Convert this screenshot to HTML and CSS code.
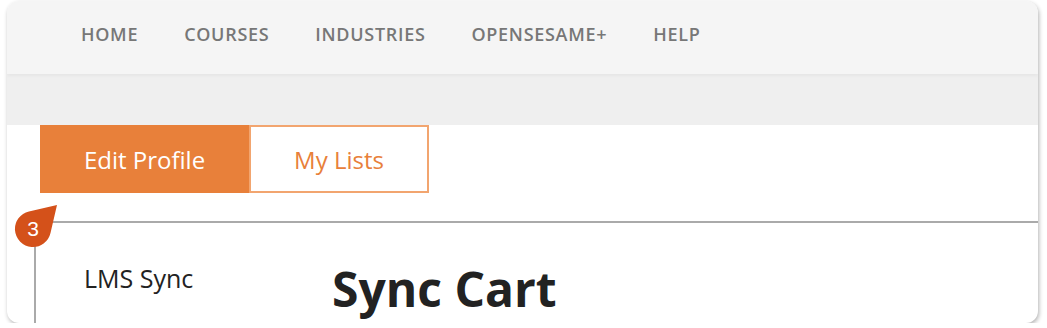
FILE: index.html
```html
<!DOCTYPE html>
<html>
<head>
  <title>Edit Profile</title>
  <link rel="stylesheet" href="styles.css">
</head>
<body>
  <div class="frame">
    <div class="nav">
      <a href="#">HOME</a>
      <a href="#">COURSES</a>
      <a href="#">INDUSTRIES</a>
      <a href="#">OPENSESAME+</a>
      <a href="#">HELP</a>
    </div>

    <div class="band"></div>

    <div class="content">
      <div class="tabs">
        <a href="#" class="tab active">Edit Profile</a>
        <a href="#" class="tab">My Lists</a>
      </div>

      <div class="panel">
        <div class="side">LMS Sync</div>
        <h1>Sync Cart</h1>
      </div>

      <div class="badge">
        <svg width="44" height="44" viewBox="0 0 44 44">
          <path d="M43 1 L36.5 29 A18 18 0 1 1 14.95 7.46 Z" fill="#d4511a"/>
        </svg>
        <span>3</span>
      </div>
    </div>
  </div>
</body>
</html>
```

FILE: styles.css
```css
body {
  margin: 0;
  background-color: #fff;
  font-family: "Open Sans", Arial, sans-serif;
}

.frame {
  width: 1031px;
  height: 322px;
  margin: 1px 0 0 7px;
  border-radius: 12px;
  overflow: hidden;
  background-color: #fff;
  box-shadow: 1px 2px 4px rgba(0, 0, 0, 0.3);
}

.nav {
  position: relative;
  z-index: 1;
  display: flex;
  gap: 46px;
  height: 52px;
  padding: 21px 0 0 74px;
  background-color: #f5f5f5;
  box-shadow: 0 2px 3px rgba(0, 0, 0, 0.04);
}

.nav a {
  color: #777;
  text-decoration: none;
  font-size: 18px;
  line-height: 24px;
  font-weight: 600;
  letter-spacing: 0.7px;
}

.band {
  height: 51px;
  background-color: #efefef;
}

.content {
  position: relative;
}

.tabs {
  display: flex;
  margin-left: 33px;
}

.tab {
  display: flex;
  align-items: center;
  justify-content: center;
  height: 68px;
  box-sizing: border-box;
  font-size: 24px;
  text-decoration: none;
  color: #e8803a;
  border: 2px solid #f2a56f;
}

.tab.active {
  width: 209px;
  background-color: #e8803a;
  border-color: #e8803a;
  color: #fff;
}

.tab:not(.active) {
  width: 180px;
}

.panel {
  display: flex;
  margin: 28px 0 0 27px;
  padding: 34px 0 0 48px;
  border-top: 2px solid #aaa;
  border-left: 2px solid #aaa;
  height: 120px;
}

.side {
  width: 248px;
  font-size: 25px;
  color: #222;
  line-height: 42px;
}

.panel h1 {
  margin: 0;
  font-size: 48px;
  font-weight: 700;
  color: #222;
  line-height: 63px;
}

.badge {
  position: absolute;
  left: 7px;
  top: 79px;
  width: 44px;
  height: 44px;
}

.badge svg {
  display: block;
}

.badge span {
  position: absolute;
  left: 1px;
  top: 7px;
  width: 36px;
  text-align: center;
  color: #fff;
  font-family: Arial, "Liberation Sans", sans-serif;
  font-size: 21px;
  line-height: 36px;
}
```
